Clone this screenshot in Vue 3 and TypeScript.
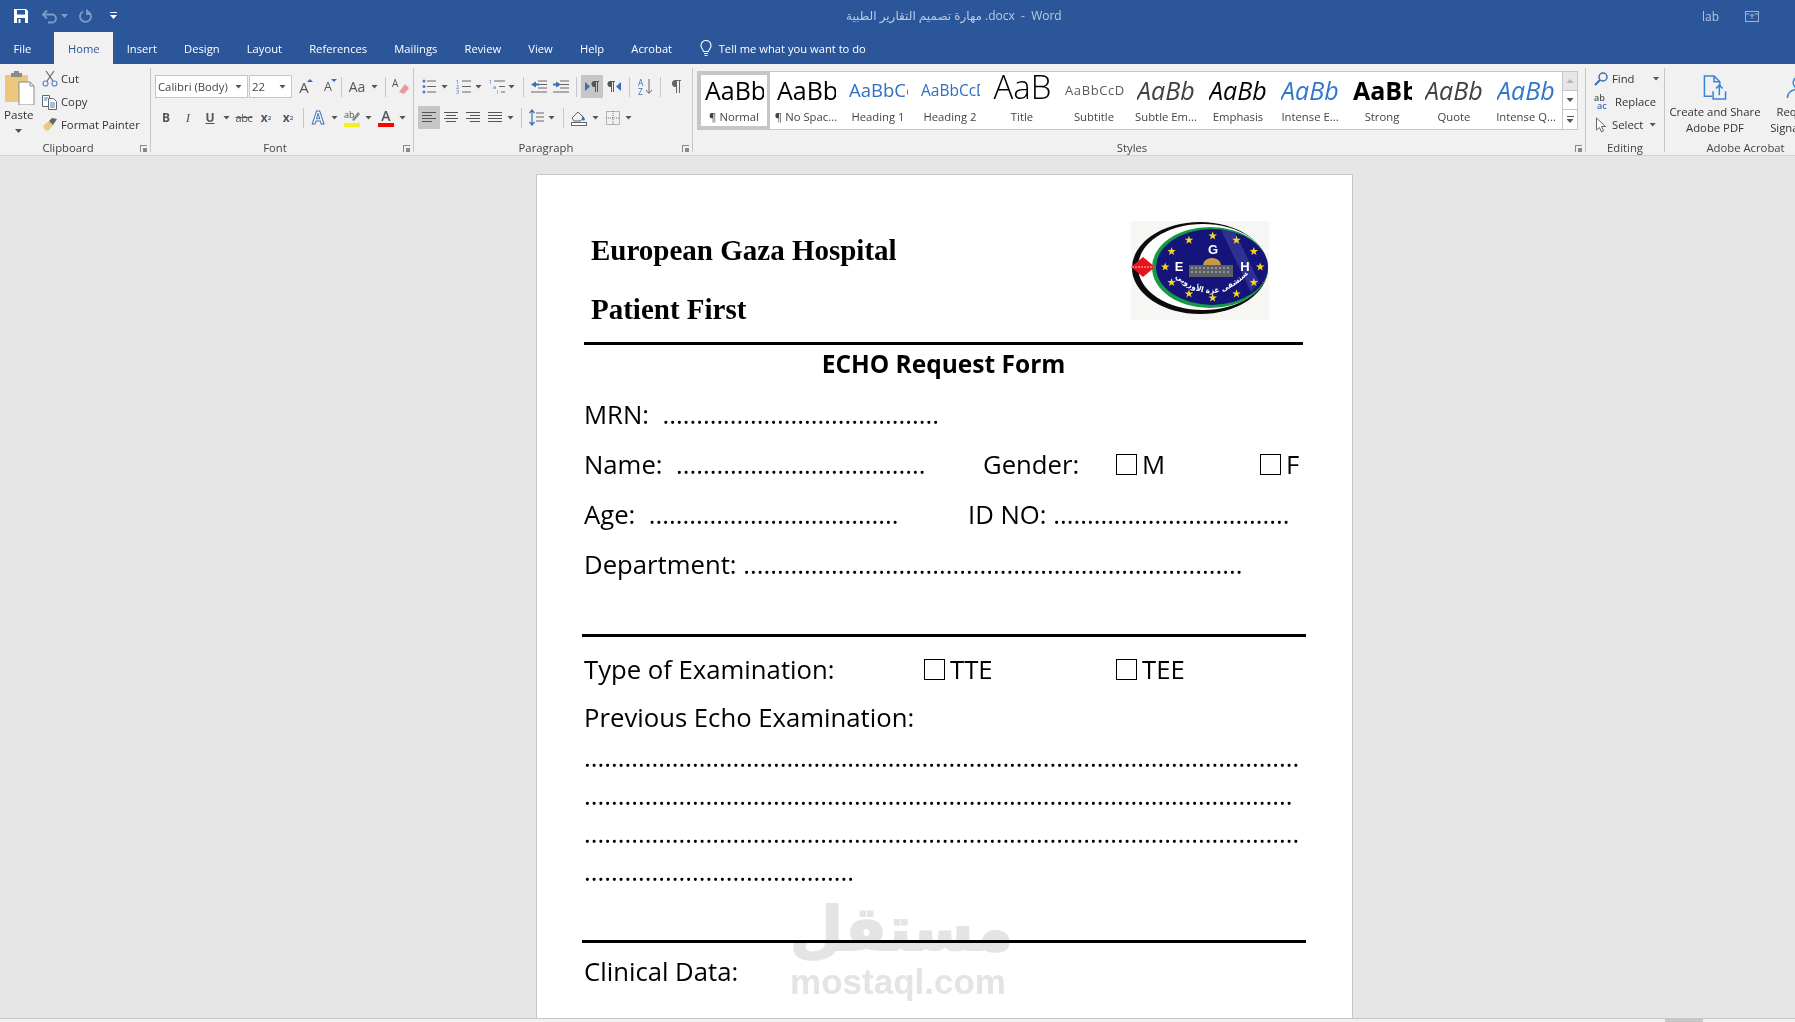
<template>
  <div class="word">
    <!-- title bar -->
    <header class="titlebar">
      <div class="qat">
        <svg class="save" width="16" height="16" viewBox="0 0 16 16"><path d="M1 1h12l2 2v12H1z" fill="#fff"/><rect x="4" y="2" width="8" height="4.500" fill="#2b579a"/><rect x="4" y="10" width="8" height="5" fill="#2b579a"/><rect x="5.500" y="11" width="2" height="4" fill="#fff"/></svg>
        <svg class="undo" width="17" height="15" viewBox="0 0 17 15" fill="none" stroke="#7f9cc6" stroke-width="1.800"><path d="M2 5.500h9a4 4 0 0 1 0 8H7"/><path d="M6 1.500l-4 4 4 4"/></svg>
        <i class="caret dim"></i>
        <svg class="redo" width="14" height="15" viewBox="0 0 14 15" fill="none" stroke="#7f9cc6" stroke-width="1.800"><path d="M4 2.500a5.500 5.500 0 1 0 5 0"/><path d="M8 .5v4.500h4"/></svg>
        <svg class="more" width="7" height="8" viewBox="0 0 7 8"><rect width="7" height="1" fill="#fff"/><path d="M0 3h7L3.500 7z" fill="#fff"/></svg>
      </div>
      <div class="doc-title">مهارة تصميم التقارير الطبية .docx&nbsp; - &nbsp;Word</div>
      <div class="win">
        <span>lab</span>
        <svg width="14" height="11" viewBox="0 0 14 11" fill="none" stroke="#9fb2d2"><rect x=".5" y=".5" width="13" height="10"/><path d="M7 8V3M5 5l2-2 2 2M.5 3h4M9.500 3h4"/></svg>
      </div>
    </header>

    <!-- tabs -->
    <nav class="tabs">
      <span v-for="t in tabs" :key="t" class="tab" :class="{ on: t === 'Home', file: t === 'File' }">{{ t }}</span>
      <span class="tell">
        <svg width="12" height="17" viewBox="0 0 12 17" fill="none" stroke="#fff" stroke-width="1.100"><path d="M3.500 11.500C3 9 1 8.500 1 5.500a5 5 0 0 1 10 0c0 3-2 3.500-2.500 6z"/><path d="M4 13.500h4M4.500 15.500h3"/></svg>
        Tell me what you want to do
      </span>
    </nav>

    <!-- ribbon -->
    <section class="ribbon">
      <div class="group clip">
        <div class="grp-body clip-body">
          <div class="paste">
            <svg width="30" height="35" viewBox="0 0 30 35">
              <path d="M0 5h23v27H0z" fill="#eec77e"/>
              <path d="M6 3h3V1h5v2h3v4H6z" fill="#8a8a8a"/>
              <path d="M14 12h11l4 4v19H14z" fill="#fff" stroke="#8a8a8a"/>
              <path d="M25 12v4h4" fill="none" stroke="#8a8a8a"/>
            </svg>
            <span>Paste</span>
            <i class="caret"></i>
          </div>
          <div class="clip-list">
            <div class="clip-row">
              <svg width="16" height="17" viewBox="0 0 16 17" fill="none" stroke="#5a8ac6" stroke-width="1.200"><circle cx="3.500" cy="13.500" r="2.500"/><circle cx="12.500" cy="13.500" r="2.500"/><path d="M5 11L12 1M11 11L4 1" stroke="#666"/></svg>
              Cut
            </div>
            <div class="clip-row">
              <svg width="16" height="16" viewBox="0 0 16 16" fill="#fff" stroke="#666"><path d="M.5 1.500h7v11h-7z"/><path d="M6.500 4.500h5l3 3v8h-8z"/><path d="M2 4h4M2 6h3M8 9h5M8 11h5M8 13h5" stroke="#4a7fc0"/></svg>
              Copy
            </div>
            <div class="clip-row">
              <svg width="16" height="15" viewBox="0 0 16 15"><path d="M1 9l6-5 4 4-5 6-3-1z" fill="#eec77e"/><path d="M7 4l3-3 5 1-4 6z" fill="#666"/></svg>
              Format Painter
            </div>
          </div>
        </div>
        <div class="grp-label">Clipboard</div>
        <i class="launcher"></i>
      </div>

      <div class="group font">
        <div class="grp-body rows">
          <div class="row">
            <span class="combo name">Calibri (Body)<i class="caret"></i></span>
            <span class="combo size">22<i class="caret"></i></span>
            <span class="cell w24 grow-a">A<em class="up"></em></span>
            <span class="cell w24 shrink-a">A<em class="down"></em></span>
            <i class="sep g1"></i>
            <span class="cell w24 aa g3">Aa</span><i class="caret g2"></i>
            <i class="sep g7"></i>
            <svg class="g6" width="17" height="17" viewBox="0 0 17 17"><path d="M7 14l6-8 4 4-5 6z" fill="#e89a9f"/><text x="0" y="9" font-size="10" font-family="Open Sans" fill="#555">A</text></svg>
          </div>
          <div class="row">
            <span class="cell w22 fmt b">B</span>
            <span class="cell w22 fmt i">I</span>
            <span class="cell w22 fmt u">U</span><i class="caret g2"></i>
            <span class="cell w22 fmt s g3">abc</span>
            <span class="cell w22 fmt sub">x<sub>2</sub></span>
            <span class="cell w22 fmt sub">x<sup>2</sup></span>
            <i class="sep g4"></i>
            <span class="cell w22 effect g3">A</span><i class="caret g2"></i>
            <svg class="g6" width="16" height="18" viewBox="0 0 16 18"><text x="0" y="9" font-size="9" font-family="Open Sans" fill="#555">ab</text><path d="M8 11l6-8 2 2-6 7z" fill="#888"/><rect y="14" width="16" height="4" fill="#f5f019"/></svg>
            <i class="caret g5"></i>
            <span class="color-a g6">A</span><i class="caret g5"></i>
          </div>
        </div>
        <div class="grp-label">Font</div>
        <i class="launcher"></i>
      </div>

      <div class="group para">
        <div class="grp-body rows">
          <div class="row">
            <svg class="g4" width="14" height="15" viewBox="0 0 14 15"><g fill="#4a7fc0"><circle cx="2" cy="2" r="1.500"/><circle cx="2" cy="7.500" r="1.500"/><circle cx="2" cy="13" r="1.500"/></g><path d="M5 2h9M5 7.500h9M5 13h9" stroke="#666"/></svg>
            <i class="caret g5"></i>
            <svg class="g8" width="15" height="15" viewBox="0 0 15 15"><text x="0" y="5" font-size="5.500" fill="#3a6fb5" font-family="Open Sans">1</text><text x="0" y="10" font-size="5.500" fill="#3a6fb5" font-family="Open Sans">2</text><text x="0" y="15" font-size="5.500" fill="#3a6fb5" font-family="Open Sans">3</text><path d="M6 2h9M6 7.500h9M6 13h9" stroke="#666"/></svg>
            <i class="caret g4"></i>
            <svg class="g7" width="16" height="15" viewBox="0 0 16 15"><text x="0" y="5" font-size="5.500" fill="#3a6fb5" font-family="Open Sans">1</text><text x="4" y="10" font-size="5.500" fill="#3a6fb5" font-family="Open Sans">a</text><text x="8" y="15" font-size="5.500" fill="#3a6fb5" font-family="Open Sans">i</text><path d="M5 2h11M10 7.500h6M12 13h4" stroke="#666"/></svg>
            <i class="caret g3"></i>
            <i class="sep g8"></i>
            <svg class="g7" width="16" height="13" viewBox="0 0 16 13"><path d="M7 1h9M7 4.500h9M7 8h9M0 12h16" stroke="#666"/><path d="M0 4.500L5 1.500v2h3v2H5v2z" fill="#3a6fb5"/></svg>
            <svg class="g6" width="16" height="13" viewBox="0 0 16 13"><path d="M7 1h9M7 4.500h9M7 8h9M0 12h16" stroke="#666"/><path d="M8 4.500L3 1.500v2H0v2h3v2z" fill="#3a6fb5"/></svg>
            <i class="sep g7"></i>
            <span class="cell w22 sel g4"><svg width="14" height="11" viewBox="0 0 14 11"><path d="M0 1l5 4.500L0 10z" fill="#3a6fb5"/><path d="M9 0h5v1h-1v10h-1V1h-1v10h-1V6a3 3 0 0 1-1-6z" fill="#555"/></svg></span>
            <span class="cell w20 g1"><svg width="14" height="11" viewBox="0 0 14 11"><path d="M14 1L9 5.500l5 4.500z" fill="#3a6fb5"/><path d="M3 0h5v1H7v10H6V1H5v10H4V6a3 3 0 0 1-1-6z" fill="#555"/></svg></span>
            <i class="sep g5"></i>
            <svg class="g8" width="15" height="17" viewBox="0 0 15 17"><text x="0" y="8" font-size="8.500" fill="#3a6fb5" font-family="Open Sans">A</text><text x="0" y="17" font-size="8.500" fill="#3a6fb5" font-family="Open Sans">Z</text><path d="M11 1v14M8 12l3 3.500 3-3.500" fill="none" stroke="#666"/></svg>
            <i class="sep g7"></i>
            <svg class="g10" width="10" height="13" viewBox="0 0 10 13"><path d="M4 0h6v1H9v12H8V1H6v12H5V7a3.500 3.500 0 0 1-1-7z" fill="#666"/></svg>
          </div>
          <div class="row">
            <span class="cell w22 sel"><svg width="14" height="11" viewBox="0 0 14 11"><path d="M0 .5h14M0 3.500h10M0 6.500h14M0 9.500h10" stroke="#555"/></svg></span>
            <span class="cell w22"><svg width="14" height="11" viewBox="0 0 14 11"><path d="M0 .5h14M2 3.500h10M0 6.500h14M2 9.500h10" stroke="#555"/></svg></span>
            <span class="cell w22"><svg width="14" height="11" viewBox="0 0 14 11"><path d="M0 .5h14M4 3.500h10M0 6.500h14M4 9.500h10" stroke="#555"/></svg></span>
            <span class="cell w22"><svg width="14" height="11" viewBox="0 0 14 11"><path d="M0 .5h14M0 3.500h14M0 6.500h14M0 9.500h14" stroke="#555"/></svg></span>
            <i class="caret g1"></i>
            <i class="sep g7"></i>
            <svg class="g7" width="15" height="17" viewBox="0 0 15 17"><path d="M3 1v15M.5 4L3 1l2.500 3M.5 13L3 16l2.500-3" fill="none" stroke="#3a6fb5" stroke-width="1.200"/><path d="M7 4h8M7 8h8M7 12h8" stroke="#666"/></svg>
            <i class="caret g4"></i>
            <i class="sep g8"></i>
            <svg class="g7" width="16" height="16" viewBox="0 0 16 16"><path d="M1 8l6-6 6 6-4 3H3z" fill="none" stroke="#666"/><path d="M11 5l3 4a1.500 1.500 0 0 1-3 0z" fill="#3a6fb5"/><rect x=".5" y="12.500" width="15" height="3" fill="#fff" stroke="#666"/></svg>
            <i class="caret g5"></i>
            <svg class="g7" width="14" height="14" viewBox="0 0 14 14" fill="none" stroke="#777" stroke-dasharray="1 1"><rect x=".5" y=".5" width="13" height="13"/><path d="M7 0v14M0 7h14"/></svg>
            <i class="caret g5"></i>
          </div>
        </div>
        <div class="grp-label">Paragraph</div>
        <i class="launcher"></i>
      </div>

      <div class="group styles">
        <div class="gallery">
          <div class="items">
            <div v-for="s in styleItems" :key="s.label" class="style" :class="[s.cls, { picked: s.cls === 'normal' }]">
              <div class="prev">{{ s.prev }}</div>
              <div class="lab">{{ s.label }}</div>
            </div>
          </div>
          <div class="scroller">
            <span class="off"><i class="tri-up"></i></span>
            <span><i class="caret"></i></span>
            <span class="last"><b></b><i class="caret"></i></span>
          </div>
        </div>
        <div class="grp-label">Styles</div>
        <i class="launcher"></i>
      </div>

      <div class="group editing">
        <div class="grp-body edit-list">
          <div class="clip-row">
            <svg width="14" height="14" viewBox="0 0 14 14" fill="none" stroke="#3a6fb5" stroke-width="1.500"><circle cx="9" cy="5" r="4"/><path d="M6 8l-5 5" stroke-width="2"/></svg>
            Find<i class="caret c16"></i>
          </div>
          <div class="clip-row">
            <span class="abac"><b>ab</b><b class="ac">ac</b></span>
            Replace
          </div>
          <div class="clip-row">
            <svg width="14" height="16" viewBox="0 0 14 16" fill="#fff" stroke="#666"><path d="M2.500 1v12l3-2.500 2 4.500 2-1-2-4.500h4z"/></svg>
            Select<i class="caret"></i>
          </div>
        </div>
        <div class="grp-label">Editing</div>
      </div>

      <div class="group acrobat">
        <div class="grp-body acro-body">
          <div class="acro">
            <svg width="24" height="26" viewBox="0 0 24 26" fill="none" stroke="#3d84d6" stroke-width="1.600"><path d="M9 22H1V1h10l6 6v5"/><path d="M11 1v6h6"/><path d="M10 17v8h13v-8M16.500 21v-10M13 14l3.500-3.500L20 14"/></svg>
            <span>Create and Share<br />Adobe PDF</span>
          </div>
          <div class="acro second">
            <svg width="24" height="26" viewBox="0 0 24 26" fill="none" stroke="#3d84d6" stroke-width="1.600"><circle cx="13" cy="8" r="6"/><path d="M1 24c0-6 4-8 8-9M17 15l6 0M17 20h6"/></svg>
            <span>Request<br />Signatures</span>
          </div>
        </div>
        <div class="grp-label">Adobe Acrobat</div>
      </div>
    </section>

    <!-- document -->
    <main class="canvas">
      <article class="page">
        <div class="head">
          <div class="brand">
            <div>European Gaza Hospital</div>
            <div>Patient First</div>
          </div>
          <svg class="logo" width="138" height="99" viewBox="0 0 138 99">
            <rect width="138" height="99" fill="#f6f7f4" />
            <ellipse cx="69" cy="47" rx="68" ry="46" fill="#0b0b0b" />
            <ellipse cx="72" cy="46" rx="65" ry="43" fill="#fff" />
            <ellipse cx="79" cy="46.500" rx="58" ry="40.500" fill="#159a46" />
            <ellipse cx="81" cy="46" rx="56" ry="38" fill="#14147a" />
            <path d="M90 9l14 2 24 50-8 10z" fill="#4a4ca8" opacity=".5" />
            <polygon v-for="(p, i) in stars" :key="i" :points="p" fill="#f7d51d" />
            <path d="M0 46l12-10 12 10-12 10z" fill="#e8141c" />
            <path d="M1 46h22" stroke="#f4c9c9" stroke-dasharray="2 1" />
            <g font-family="Liberation Sans" font-weight="700" font-size="13" fill="#fff" text-anchor="middle">
              <text x="82" y="33">G</text>
              <text x="48" y="50">E</text>
              <text x="114" y="50">H</text>
            </g>
            <path d="M72 44a9 7 0 0 1 18 0z" fill="#c99a45" />
            <rect x="58" y="44" width="44" height="12" fill="#5c5e66" />
            <path d="M60 47h40M60 51h40" stroke="#c9c9cc" stroke-dasharray="2 2" />
            <path id="logoArc" d="M44 56Q82 90 118 52" fill="none" />
            <text font-size="7.500" font-weight="700" fill="#fff" font-family="DejaVu Sans"><textPath href="#logoArc">مستشفى غزة الأوروبي</textPath></text>
          </svg>
        </div>
        <div class="rule top"></div>
        <h1 class="form-title">ECHO Request Form</h1>

        <div class="line mrn">MRN:&nbsp; {{ dots(41) }}</div>
        <div class="line">
          <span class="col-gender">Name:&nbsp; {{ dots(37) }}</span>
          <span class="col-box">Gender:</span>
          <span class="col-m"><i class="box"></i>M</span>
          <span><i class="box"></i>F</span>
        </div>
        <div class="line">
          <span class="col-id">Age:&nbsp; {{ dots(37) }}</span>
          <span>ID NO: {{ dots(35) }}</span>
        </div>
        <div class="line">Department: {{ dots(74) }}</div>

        <div class="rule wide first"></div>
        <div class="line type">
          <span class="col-tte">Type of Examination:</span>
          <span class="col-tee"><i class="box"></i>TTE</span>
          <span><i class="box"></i>TEE</span>
        </div>
        <div class="line prev-exam">Previous Echo Examination:</div>
        <div v-for="(n, i) in dotLines" :key="i" class="dot-line">{{ dots(n) }}</div>
        <div class="rule wide second"></div>
        <div class="line clinical">Clinical Data:</div>
      </article>
      <div class="watermark">
        <div class="wm-ar">مستقل</div>
        <div class="wm-en">mostaql.com</div>
      </div>
    </main>

    <footer class="status"><span class="thumb"></span></footer>
  </div>
</template>

<script setup lang="ts">
const tabs: string[] = ['File', 'Home', 'Insert', 'Design', 'Layout', 'References', 'Mailings', 'Review', 'View', 'Help', 'Acrobat']

interface StyleItem {
  prev: string
  label: string
  cls: string
}

const styleItems: StyleItem[] = [
  { prev: 'AaBb', label: '¶ Normal', cls: 'normal' },
  { prev: 'AaBb', label: '¶ No Spac...', cls: 'plain' },
  { prev: 'AaBbCc', label: 'Heading 1', cls: 'h1' },
  { prev: 'AaBbCcD', label: 'Heading 2', cls: 'h2' },
  { prev: 'AaB', label: 'Title', cls: 'title' },
  { prev: 'AaBbCcD', label: 'Subtitle', cls: 'sub' },
  { prev: 'AaBb', label: 'Subtle Em...', cls: 'em grey' },
  { prev: 'AaBb', label: 'Emphasis', cls: 'em' },
  { prev: 'AaBb', label: 'Intense E...', cls: 'em blue' },
  { prev: 'AaBb', label: 'Strong', cls: 'strong' },
  { prev: 'AaBb', label: 'Quote', cls: 'em grey' },
  { prev: 'AaBb', label: 'Intense Q...', cls: 'em blue' }
]

const dotLines: number[] = [106, 105, 106, 40]

function dots(n: number): string {
  return '.'.repeat(n)
}

// twelve stars round the blue disc of the logo
const stars: string[] = Array.from({ length: 12 }, (_, i) => {
  const a = (i * Math.PI) / 6
  const cx = 81.7 + 47.5 * Math.cos(a)
  const cy = 46 + 31 * Math.sin(a)
  const pts: string[] = []
  for (let k = 0; k < 10; k++) {
    const r = k % 2 === 0 ? 4.5 : 1.8
    const t = -Math.PI / 2 + (k * Math.PI) / 5
    pts.push(`${(cx + r * Math.cos(t)).toFixed(1)},${(cy + r * Math.sin(t)).toFixed(1)}`)
  }
  return pts.join(' ')
})
</script>

<style>
html,
body {
  margin: 0;
  background: #e6e6e6;
}
</style>

<style scoped>
* {
  box-sizing: border-box;
}

.word {
  width: 1795px;
  height: 1022px;
  overflow: hidden;
  display: flex;
  flex-direction: column;
  font-family: "Open Sans", "DejaVu Sans", sans-serif;
  font-size: 11.3px;
  color: #444;
  position: relative;
}

/* title bar */
.titlebar {
  height: 32px;
  background: #2b579a;
  display: flex;
  align-items: center;
  position: relative;
  flex: none;
}
.qat {
  display: flex;
  align-items: center;
  padding-left: 13px;
}
.undo { margin-left: 12px; }
.caret.dim { margin-left: 3px; background: #7f9cc6; }
.redo { margin-left: 11px; }
.more { margin-left: 17px; }
.doc-title {
  position: absolute;
  left: 846px;
  width: 214px;
  text-align: center;
  color: #bccadf;
  font-size: 12px;
  white-space: nowrap;
  top: 7px;
  direction: ltr;
}
.win {
  margin-left: auto;
  padding-right: 36px;
  display: flex;
  align-items: center;
  gap: 26px;
  color: #b5c4dc;
  font-size: 12px;
}

/* tabs */
.tabs {
  height: 32px;
  background: #2b579a;
  display: flex;
  align-items: stretch;
  flex: none;
  color: #fff;
  font-size: 11.2px;
}
.tab {
  padding: 0 13.6px;
  display: flex;
  align-items: center;
}
.tab.file { padding-right: 23px; }
.tab.on {
  background: #f1f1f1;
  color: #2b579a;
}
.tell {
  display: flex;
  align-items: center;
  gap: 7px;
  margin-left: 14px;
  white-space: nowrap;
}

/* ribbon */
.ribbon {
  height: 92px;
  background: #f1f1f1;
  border-bottom: 1px solid #d2d2d2;
  display: flex;
  flex: none;
  padding-top: 4px;
}
.group {
  position: relative;
  height: 84px;
  border-right: 1px solid #c6c6c6;
  flex: none;
}
.clip { width: 151px; }
.font { width: 263px; }
.para { width: 279px; }
.styles { width: 893px; }
.editing { width: 79px; }
.acrobat { width: 161px; border-right: none; }
.grp-body { height: 68px; }
.grp-label {
  position: absolute;
  left: 0;
  right: 14px;
  top: 72px;
  text-align: center;
  font-size: 11.3px;
  line-height: 16px;
  white-space: nowrap;
}
.editing .grp-label { right: 0; }
.acrobat .grp-label { right: 0; }
.launcher {
  position: absolute;
  right: 3px;
  bottom: 0;
  width: 7px;
  height: 7px;
  border-left: 1px solid #888;
  border-top: 1px solid #888;
}
.launcher::after {
  content: '';
  position: absolute;
  right: 0;
  bottom: 0;
  width: 4px;
  height: 4px;
  background: #888;
}

.caret {
  display: inline-block;
  width: 7px;
  height: 4px;
  background: #555;
  clip-path: polygon(0 0, 100% 0, 50% 100%);
  flex: none;
}

/* clipboard */
.clip-body {
  display: flex;
}
.paste {
  width: 40px;
  padding: 2px 0 0 5px;
  display: flex;
  flex-direction: column;
  align-items: flex-start;
  color: #333;
}
.paste span {
  margin: 2px 0 0 -1px;
  font-size: 11.6px;
  line-height: 16px;
}
.paste .caret { margin: 6px 0 0 10px; }
.clip-list {
  padding-left: 2px;
  margin-top: -1px;
}
.clip-row {
  height: 23px;
  display: flex;
  align-items: center;
  gap: 3px;
  color: #333;
  white-space: nowrap;
}
.clip-row svg { flex: none; }

/* font + paragraph rows */
.rows {
  padding-top: 7px;
}
.row {
  height: 23px;
  display: flex;
  align-items: center;
  margin-bottom: 8px;
  padding-left: 4px;
}
.row svg { flex: none; }
.combo {
  height: 23px;
  border: 1px solid #c6c6c6;
  background: #fff;
  display: flex;
  align-items: center;
  justify-content: space-between;
  padding: 0 5px 0 2px;
  color: #444;
  font-size: 11.3px;
  white-space: nowrap;
  flex: none;
}
.combo.name { width: 93px; }
.combo.size { width: 43px; margin-left: 1px; }
.cell {
  height: 23px;
  display: flex;
  align-items: center;
  justify-content: center;
  position: relative;
  flex: none;
}
.w20 { width: 20px; }
.w22 { width: 22px; }
.w24 { width: 24px; }
.grow-a { font-size: 15px; color: #555; }
.shrink-a { font-size: 12.500px; color: #555; }
.up,
.down {
  position: absolute;
  right: 3px;
  top: 4px;
  border-left: 3px solid transparent;
  border-right: 3px solid transparent;
}
.up { border-bottom: 3px solid #3a6fb5; }
.down { border-top: 3px solid #3a6fb5; }
.aa { font-size: 14px; color: #555; }
.sep {
  width: 1px;
  height: 20px;
  background: #c6c6c6;
  flex: none;
}
.g1 { margin-left: 1px; }
.g2 { margin-left: 2px; }
.g3 { margin-left: 3px; }
.g4 { margin-left: 4px; }
.g5 { margin-left: 5px; }
.g6 { margin-left: 6px; }
.g7 { margin-left: 7px; }
.g8 { margin-left: 8px; }
.g10 { margin-left: 10px; }
.fmt {
  font-size: 12px;
  color: #555;
}
.fmt.b { font-weight: 700; }
.fmt.i { font-style: italic; font-family: "Liberation Serif", serif; font-size: 13px; }
.fmt.u { text-decoration: underline; font-weight: 700; }
.fmt.s { text-decoration: line-through; font-size: 11px; letter-spacing: -.4px; }
.fmt.sub { font-weight: 700; font-size: 12px; }
.fmt sub,
.fmt sup {
  color: #3a6fb5;
  font-size: 6px;
  line-height: 0;
}
.effect {
  font-size: 17px;
  font-weight: 700;
  color: #fff;
  -webkit-text-stroke: 1px #3f74bd;
}
.color-a {
  display: block;
  width: 16px;
  height: 18px;
  font-size: 14px;
  line-height: 13px;
  text-align: center;
  color: #555;
  border-bottom: 4px solid #f00;
  font-weight: 600;
  flex: none;
}
.sel { background: #c6c6c6; }

/* styles gallery */
.gallery {
  display: flex;
  width: 881px;
  height: 59px;
  margin: 3px 0 0 4px;
  border: 1px solid #c6c6c6;
  background: #fff;
}
.items {
  display: flex;
  flex: 1;
  overflow: hidden;
}
.style {
  width: 72px;
  flex: none;
  height: 57px;
  color: #444;
}
.style.picked {
  border: 3px solid #c6c6c6;
}
.prev {
  height: 35px;
  margin: 0 6px 0 7px;
  overflow: hidden;
  line-height: 36px;
  font-size: 25px;
  color: #000;
  white-space: nowrap;
}
.picked .prev {
  margin: -3px 3px 0 4px;
}
.lab {
  text-align: center;
  line-height: 20px;
  font-size: 11.3px;
  white-space: nowrap;
}
.h1 .prev { font-size: 18.500px; color: #2f6fbe; }
.h2 .prev { font-size: 15.500px; color: #2f6fbe; }
.title .prev { font-size: 33px; font-weight: 300; line-height: 29px; text-align: center; }
.sub .prev { font-size: 13px; color: #5a5a5a; letter-spacing: .6px; }
.em .prev { font-style: italic; }
.grey .prev { color: #404040; }
.blue .prev { color: #2f76cc; }
.strong .prev { font-weight: 700; }
.scroller {
  width: 15px;
  flex: none;
  display: flex;
  flex-direction: column;
  border-left: 1px solid #c6c6c6;
}
.scroller span {
  height: 19px;
  display: flex;
  flex-direction: column;
  align-items: center;
  justify-content: center;
  background: #fff;
  border-bottom: 1px solid #c6c6c6;
}
.scroller .off { background: #e6e6e6; }
.scroller .last { border-bottom: none; gap: 2px; }
.scroller .last b { width: 7px; height: 1px; background: #555; }
.tri-up {
  width: 7px;
  height: 4px;
  background: #b5b5b5;
  clip-path: polygon(50% 0, 100% 100%, 0 100%);
}

/* editing */
.edit-list {
  padding-left: 8px;
  margin-top: -1px;
}
.abac {
  width: 16px;
  font-size: 9px;
  line-height: 8px;
  color: #555;
  display: block;
  margin-right: 1px;
}
.abac b { display: block; font-weight: 600; }
.abac .ac { color: #3a6fb5; margin-left: 3px; }
.edit-list .clip-row { gap: 4px; }
.edit-list .caret { margin-left: 2px; }
.edit-list .c16 { margin-left: 14px; }

/* acrobat */
.acro-body {
  display: flex;
}
.acro {
  width: 100px;
  flex: none;
  display: flex;
  flex-direction: column;
  align-items: center;
  padding-top: 7px;
  text-align: center;
  color: #333;
  white-space: nowrap;
}
.acro span {
  margin-top: 4px;
  line-height: 16px;
}
.second {
  width: 60px;
  margin-left: 3px;
}

/* document */
.canvas {
  flex: 1;
  min-height: 0;
  background: #e6e6e6;
  padding: 18px 0 0 536px;
  overflow: hidden;
  position: relative;
}
.page {
  width: 817px;
  height: 900px;
  background: #fff;
  border: 1px solid #c6c6c6;
  padding: 46px 0 0 47px;
  color: #000;
  font-size: 25.700px;
}
.head {
  display: flex;
  align-items: flex-start;
  width: 685px;
  justify-content: space-between;
}
.brand {
  font-family: "Liberation Serif", serif;
  font-weight: 700;
  font-size: 29px;
  line-height: 59px;
  padding-left: 7px;
}
.logo {
  display: block;
  flex: none;
}
.rule {
  height: 3px;
  background: #000;
}
.rule.top {
  width: 719px;
  margin-top: 3px;
}
.form-title {
  width: 719px;
  margin: 0;
  text-align: center;
  font-size: 24.500px;
  line-height: 38px;
  font-weight: 700;
}
.line {
  display: flex;
  align-items: center;
  height: 50px;
  line-height: 50px;
  white-space: pre;
}
.line.mrn { margin-top: 7px; }
.col-gender { width: 399px; }
.col-box { width: 133px; }
.col-m { width: 144px; }
.col-id { width: 384px; }
.col-tte { width: 340px; }
.col-tee { width: 192px; }
.box {
  display: inline-block;
  width: 21px;
  height: 21px;
  border: 1.5px solid #000;
  margin-right: 5px;
  vertical-align: -1px;
}
.rule.wide {
  width: 724px;
  margin-left: -2px;
}
.rule.first { margin-top: 44px; }
.type { margin-top: 7px; height: 52px; }
.prev-exam { height: 43px; }
.dot-line {
  height: 38px;
  line-height: 38px;
  white-space: pre;
}
.rule.second { margin-top: 49px; }
.clinical { margin-top: 4px; }

.watermark {
  position: absolute;
  left: 790px;
  top: 738px;
  width: 216px;
  text-align: center;
  color: #e3e4e4;
  mix-blend-mode: multiply;
  font-weight: 700;
  pointer-events: none;
}
.wm-ar {
  font-family: "DejaVu Sans", sans-serif;
  font-size: 61px;
  line-height: 70px;
  padding-right: 5px;
  -webkit-text-stroke: 2px #e3e4e4;
}
.wm-en {
  font-family: "Liberation Sans", sans-serif;
  font-size: 35px;
  line-height: 36px;
}

.status {
  height: 4px;
  background: #f1f1f1;
  border-top: 1px solid #c6c6c6;
  flex: none;
  position: relative;
}
.thumb {
  position: absolute;
  left: 1665px;
  top: 0;
  width: 38px;
  height: 3px;
  background: #c6c6c6;
}
</style>
